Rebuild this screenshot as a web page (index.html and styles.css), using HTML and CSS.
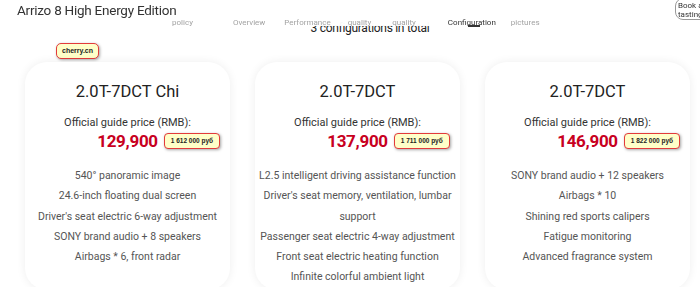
FILE: index.html
```html
<!DOCTYPE html>
<html>
<head>
	<title>Arrizo 8 High Energy Edition - Configuration</title>
<link rel="stylesheet" href="styles.css">
</head>
<body>

<div id="top-bar">
	<div class="brand">Arrizo 8 High Energy Edition</div>
	<ul class="nav">
		<li>policy</li>
		<li>Overview</li>
		<li>Performance</li>
		<li>quality</li>
		<li>quality</li>
		<li class="active">Configuration</li>
		<li>pictures</li>
	</ul>
	<div class="book">Book a tasting</div>
</div>

<h2 class="section-title">3 configurations in total</h2>

<div class="site-tag"><span class="rate-badge">cherry.cn</span></div>

<div id="config-list">
	<div class="card">
		<h3>2.0T-7DCT Chi</h3>
		<div class="price-label">Official guide price (RMB):</div>
		<div class="price"><span class="amount">129,900<span class="rate-badge rub">1 612 000 руб</span></span></div>
		<ul class="features">
			<li>540° panoramic image</li>
			<li>24.6-inch floating dual screen</li>
			<li>Driver's seat electric 6-way adjustment</li>
			<li>SONY brand audio + 8 speakers</li>
			<li>Airbags * 6, front radar</li>
		</ul>
	</div>
	<div class="card">
		<h3>2.0T-7DCT</h3>
		<div class="price-label">Official guide price (RMB):</div>
		<div class="price"><span class="amount">137,900<span class="rate-badge rub">1 711 000 руб</span></span></div>
		<ul class="features">
			<li>L2.5 intelligent driving assistance function</li>
			<li>Driver's seat memory, ventilation, lumbar support</li>
			<li>Passenger seat electric 4-way adjustment</li>
			<li>Front seat electric heating function</li>
			<li>Infinite colorful ambient light</li>
		</ul>
	</div>
	<div class="card">
		<h3>2.0T-7DCT</h3>
		<div class="price-label">Official guide price (RMB):</div>
		<div class="price"><span class="amount">146,900<span class="rate-badge rub">1 822 000 руб</span></span></div>
		<ul class="features">
			<li>SONY brand audio + 12 speakers</li>
			<li>Airbags * 10</li>
			<li>Shining red sports calipers</li>
			<li>Fatigue monitoring</li>
			<li>Advanced fragrance system</li>
		</ul>
	</div>
</div>

</body>
</html>
```

FILE: styles.css
```css
body {
	margin:0;
	font-family:Roboto, "Noto Sans", sans-serif;
	background-color:#fff;
	color:#333;
	overflow:hidden;
}

/* sticky header laid over the page */
#top-bar {
	position:fixed;
	top:0;
	left:0;
	right:0;
	height:26px;
	background-color:rgba(255,255,255,0.97);
	z-index:5;
}
#top-bar .brand {
	position:absolute;
	left:17px;
	top:2px;
	font-size:13.5px;
	color:#333;
	letter-spacing:-0.25px;
}
.nav {
	position:absolute;
	left:172px;
	top:18px;
	margin:0;
	padding:0;
	list-style:none;
	display:flex;
	font-size:8px;
	line-height:10px;
	color:#a3a3a3;
}
.nav li:nth-child(2) { margin-left:40px; }
.nav li:nth-child(3) { margin-left:19px; }
.nav li:nth-child(4) { margin-left:17px; }
.nav li:nth-child(5) { margin-left:21px; }
.nav li:nth-child(6) { margin-left:32px; }
.nav li:nth-child(7) { margin-left:15px; }
.nav li.active {
	color:#333;
	position:relative;
}
.nav li.active:after {
	content:"";
	position:absolute;
	left:20px;
	top:7px;
	width:12px;
	height:1.5px;
	background-color:#333;
}
.book {
	position:absolute;
	left:675px;
	top:-2px;
	width:40px;
	height:22px;
	border:1px solid #999;
	border-radius:8px;
	font-size:8px;
	line-height:9px;
	padding:2px 0 0 2px;
	color:#333;
	box-sizing:border-box;
}

.section-title {
	margin:21px 0 0;
	padding-left:40px;
	font-size:12px;
	font-weight:normal;
	line-height:14px;
	letter-spacing:-0.3px;
	text-align:center;
	color:#222;
}

.site-tag {
	padding:3px 0 0 56px;
	height:24px;
}

.rate-badge {
	display:inline-block;
	background-color:#ffffc8;
	border:1.5px solid #e23b3b;
	border-radius:5px;
	box-shadow:1px 1px 3px rgba(0,0,0,0.35);
	font-family:"Liberation Sans", Arial, sans-serif;
	font-weight:bold;
	font-size:7px;
	color:#222;
	padding:3px 5px;
	line-height:8px;
}

#config-list {
	display:flex;
	gap:25px;
	padding:0 0 0 25px;
}

.card {
	width:205px;
	height:228px;
	box-sizing:border-box;
	padding:20px 2px 0;
	border-radius:22px;
	background-color:#fff;
	box-shadow:0 0 10px rgba(0,0,0,0.07);
	text-align:center;
}
.card h3 {
	margin:0;
	font-size:16.5px;
	font-weight:normal;
	line-height:20px;
	color:#222;
}
.price-label {
	margin-top:14px;
	font-size:11px;
	line-height:14px;
	color:#333;
}
.price {
	margin-top:1px;
	line-height:20px;
}
.amount {
	position:relative;
	font-size:17px;
	font-weight:bold;
	color:#c8001e;
	letter-spacing:-0.3px;
}
.rate-badge.rub {
	position:absolute;
	left:calc(100% + 6px);
	top:50%;
	transform:translateY(-50%);
	font-size:6.5px;
	letter-spacing:0;
	padding:3px 6px;
	white-space:nowrap;
	border-radius:4px;
}
.features {
	list-style:none;
	margin:14px 0 0;
	padding:0;
	font-size:10.5px;
	line-height:20.3px;
	color:#555;
}
```
